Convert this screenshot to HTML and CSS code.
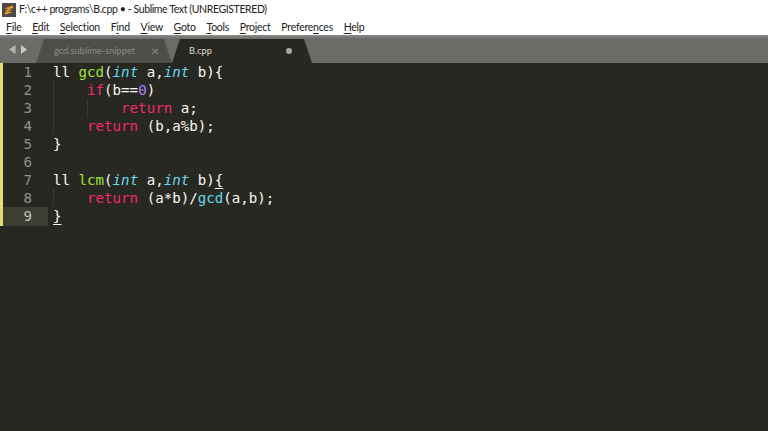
FILE: index.html
```html
<!DOCTYPE html>
<html lang="en">
<head>
<meta charset="utf-8">
<title>B.cpp - Sublime Text</title>
<link rel="stylesheet" href="styles.css">
</head>
<body>
<div class="app">
  <header class="titlebar">
    <svg class="appicon" width="14" height="14" viewBox="0 0 14 14"><rect width="14" height="14" fill="#4a4a4a"/><path d="M3 5.200 11 2.500v2.400L3 7.600zM3 7.700 11 9.600v-2.500L3 5.400zM3 9.300 11 6.700v2.400L3 11.800z" fill="#f59a1d"/></svg>
    <span class="titletext">F:\c++ programs\B.cpp • - Sublime Text (UNREGISTERED)</span>
  </header>
  <nav class="menubar">
    <span class="menuitem"><u>F</u>ile</span>
    <span class="menuitem"><u>E</u>dit</span>
    <span class="menuitem"><u>S</u>election</span>
    <span class="menuitem">F<u>i</u>nd</span>
    <span class="menuitem"><u>V</u>iew</span>
    <span class="menuitem"><u>G</u>oto</span>
    <span class="menuitem"><u>T</u>ools</span>
    <span class="menuitem"><u>P</u>roject</span>
    <span class="menuitem">Prefere<u>n</u>ces</span>
    <span class="menuitem"><u>H</u>elp</span>
  </nav>
  <div class="tabstrip">
    <div class="arrows">
      <svg width="18" height="10" viewBox="0 0 18 10"><path d="M6.500 0v9L0 4.500z" fill="#b4b5b1"/><path d="M12 0v9l6-4.500z" fill="#c9cac6"/></svg>
    </div>
    <div class="tab tab-inactive">
      <span class="tabname">gcd.sublime-snippet</span>
      <span class="tabclose">×</span>
    </div>
    <div class="tab tab-active">
      <span class="tabname">B.cpp</span>
      <span class="tabdot"></span>
    </div>
  </div>
  <main class="editor">
    <div class="gutter">
      <div class="num">1</div><div class="num">2</div><div class="num">3</div><div class="num">4</div><div class="num">5</div><div class="num">6</div><div class="num">7</div><div class="num">8</div><div class="num current">9</div>
    </div>
    <div class="code">
      <div class="line">ll <span class="fn">gcd</span>(<span class="type">int</span> a,<span class="type">int</span> b){</div>
      <div class="line"><span class="ind"></span><span class="kw">if</span>(b==<span class="const">0</span>)</div>
      <div class="line"><span class="ind"></span><span class="ind"></span><span class="kw">return</span> a;</div>
      <div class="line"><span class="ind"></span><span class="kw">return</span> (b,a%b);</div>
      <div class="line">}</div>
      <div class="line"></div>
      <div class="line">ll <span class="fn">lcm</span>(<span class="type">int</span> a,<span class="type">int</span> b)<span class="match">{</span></div>
      <div class="line"><span class="ind"></span><span class="kw">return</span> (a*b)/<span class="call">gcd</span>(a,b);</div>
      <div class="line"><span class="match">}</span></div>
    </div>
  </main>
</div>
</body>
</html>
```
FILE: styles.css
```css
* { box-sizing: border-box; }
html, body { margin: 0; height: 100%; overflow: hidden; }
.app { width: 768px; height: 431px; display: flex; flex-direction: column; background: #272822; }
.titlebar { height: 19px; flex: none; background: #fff; display: flex; align-items: center; gap: 3px; padding-left: 2px; font: 10.500px/19px Lato, sans-serif; letter-spacing: -.39px; color: #222; }
.appicon { flex: none; }
.titletext { white-space: nowrap; }
.menubar { height: 16px; flex: none; background: #fff; display: flex; gap: 10.700px; padding-left: 6px; font: 10.500px/16px Lato, sans-serif; letter-spacing: -.25px; color: #222; }
.menuitem u { text-underline-offset: 2px; text-decoration-thickness: 1px; }
.tabstrip { height: 28px; flex: none; display: flex; background: linear-gradient(#8b8c88 0, #6b6c67 4px, #6b6c67 100%); padding-top: 4px; }
.arrows { width: 36px; flex: none; padding: 6px 0 0 9px; line-height: 0; }
.tab { height: 24px; display: flex; align-items: center; justify-content: space-between; font: 9.250px/24px Lato, sans-serif; clip-path: polygon(8px 0, calc(100% - 8px) 0, 100% 100%, 0 100%); }
.tab-inactive { width: 136px; background: #4e4f4a; color: #8b8c87; padding: 0 13px 0 18px; }
.tab-active { width: 140px; background: #272822; color: #dcdcd8; padding: 0 20px 0 17px; }
.tabname { white-space: nowrap; }
.tabclose { font-size: 14px; color: #8b8c87; }
.tabdot { width: 6px; height: 6px; border-radius: 50%; background: #a7a8a4; }
.editor { flex: 1; display: flex; font: 14.150px/18px "DejaVu Sans Mono", monospace; color: #f8f8f2; }
.gutter { width: 48px; flex: none; height: 163px; color: #8f908a; border-left: 3px solid #e6db74; }
.num { height: 18px; text-align: right; padding-right: 16px; }
.current { height: 19px; background: #3e3d32; color: #c2c2bf; }
.code { padding-left: 5px; }
.line { height: 18px; white-space: pre; }
.ind { display: inline-block; width: 4ch; height: 18px; vertical-align: top; background: repeating-linear-gradient(#4a4b45 0 1px, transparent 1px 2px) left top / 1px 100% no-repeat; }
.fn { color: #a6e22e; }
.type { color: #66d9ef; font-style: italic; }
.kw { color: #f92672; }
.const { color: #ae81ff; }
.call { color: #66d9ef; }
.match { text-decoration: underline; text-underline-offset: 3px; }
```
